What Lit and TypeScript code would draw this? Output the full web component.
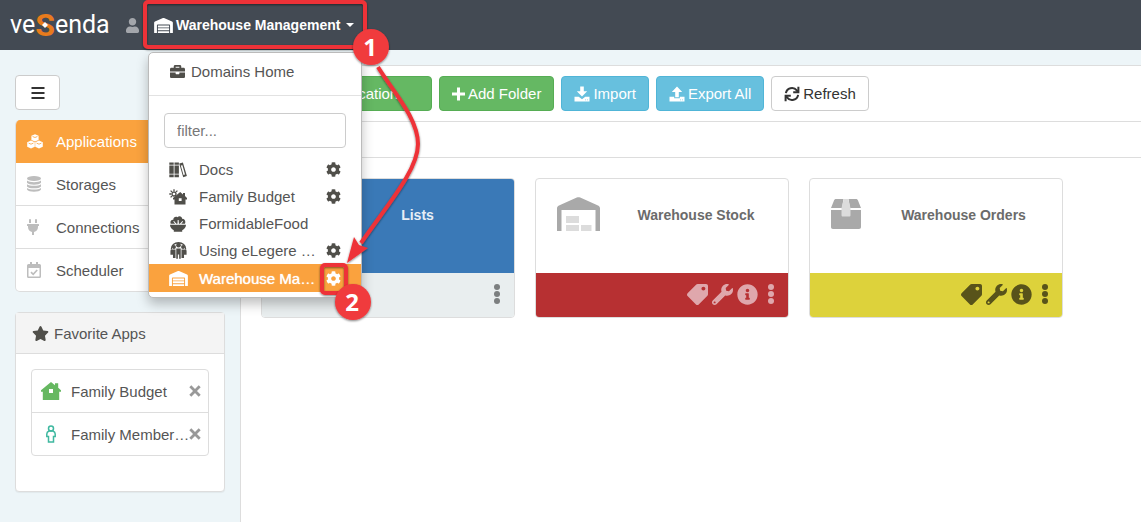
import { LitElement, html, svg, css, nothing } from "lit";
import { customElement, property, state } from "lit/decorators.js";
import { classMap } from "lit/directives/class-map.js";

const COG =
  "M487.4 315.7l-42.6-24.6c4.3-23.2 4.3-47 0-70.2l42.6-24.6c4.9-2.8 7.1-8.6 5.5-14-11.1-35.6-30-67.8-54.7-94.6-3.8-4.1-10-5.1-14.8-2.3L380.8 110c-17.9-15.4-38.5-27.3-60.8-35.1V25.8c0-5.6-3.9-10.5-9.4-11.7-36.7-8.2-74.3-7.8-109.2 0-5.5 1.2-9.4 6.1-9.4 11.7V75c-22.2 7.9-42.8 19.8-60.8 35.1L88.7 85.5c-4.9-2.8-11-1.9-14.8 2.3-24.7 26.7-43.6 58.9-54.7 94.6-1.7 5.4.6 11.2 5.5 14L67.3 221c-4.3 23.2-4.3 47 0 70.2l-42.6 24.6c-4.9 2.8-7.1 8.6-5.5 14 11.1 35.6 30 67.8 54.7 94.6 3.8 4.1 10 5.1 14.8 2.3l42.6-24.6c17.9 15.4 38.5 27.3 60.8 35.1v49.2c0 5.6 3.9 10.5 9.4 11.7 36.7 8.2 74.3 7.8 109.2 0 5.5-1.2 9.4-6.1 9.4-11.7v-49.2c22.2-7.9 42.8-19.8 60.8-35.1l42.6 24.6c4.9 2.8 11 1.9 14.8-2.3 24.7-26.7 43.6-58.9 54.7-94.6 1.5-5.5-.7-11.3-5.6-14.1zM256 336c-44.1 0-80-35.9-80-80s35.9-80 80-80 80 35.9 80 80-35.9 80-80 80z";
const WAREHOUSE =
  "M504 352H136.4c-4.4 0-8 3.6-8 8l-.1 48c0 4.4 3.6 8 8 8H504c4.4 0 8-3.6 8-8v-48c0-4.4-3.6-8-8-8zm0 96H136.1c-4.4 0-8 3.6-8 8l-.1 48c0 4.4 3.6 8 8 8h368c4.4 0 8-3.6 8-8v-48c0-4.4-3.6-8-8-8zm0-192H136.6c-4.4 0-8 3.6-8 8l-.1 48c0 4.4 3.6 8 8 8H504c4.4 0 8-3.6 8-8v-48c0-4.4-3.6-8-8-8zm106.5-139L338.4 3.7a48.15 48.15 0 0 0-36.9 0L29.5 117C11.7 124.5 0 141.9 0 161.3V504c0 4.4 3.6 8 8 8h80c4.4 0 8-3.6 8-8V256c0-17.6 14.6-32 32.6-32h382.8c18 0 32.6 14.4 32.6 32v248c0 4.4 3.6 8 8 8h80c4.4 0 8-3.6 8-8V161.3c0-19.4-11.7-36.8-29.5-44.3z";
const USER =
  "M224 256c70.7 0 128-57.3 128-128S294.7 0 224 0 96 57.3 96 128s57.3 128 128 128zm89.6 32h-16.7c-22.2 10.2-46.9 16-72.9 16s-50.6-5.8-72.9-16h-16.7C60.2 288 0 348.2 0 422.4V464c0 26.5 21.5 48 48 48h352c26.5 0 48-21.5 48-48v-41.6c0-74.2-60.2-134.4-134.4-134.4z";
const BRIEFCASE =
  "M320 336c0 8.84-7.16 16-16 16h-96c-8.84 0-16-7.16-16-16v-48H0v144c0 25.6 22.4 48 48 48h416c25.6 0 48-22.4 48-48V288H320v48zm144-208h-80V80c0-25.6-22.4-48-48-48H176c-25.6 0-48 22.4-48 48v48H48c-25.6 0-48 22.4-48 48v80h512v-80c0-25.6-22.4-48-48-48zm-144 0H192V96h128v32z";
const TAG =
  "M0 252.118V48C0 21.49 21.49 0 48 0h204.118a48 48 0 0 1 33.941 14.059l211.882 211.882c18.745 18.745 18.745 49.137 0 67.882L293.823 497.941c-18.745 18.745-49.137 18.745-67.882 0L14.059 286.059A48 48 0 0 1 0 252.118zM112 64c-26.51 0-48 21.49-48 48s21.49 48 48 48 48-21.49 48-48-21.49-48-48-48z";
const WRENCH =
  "M507.73 109.1c-2.24-9.03-13.54-12.09-20.12-5.51l-74.36 74.36-67.88-11.31-11.31-67.88 74.36-74.36c6.62-6.62 3.43-17.9-5.66-20.16-47.38-11.74-99.55.91-136.58 37.93-39.64 39.64-50.55 97.1-34.05 147.2L18.74 402.76c-24.99 24.99-24.99 65.51 0 90.5 24.99 24.99 65.51 24.99 90.5 0l213.21-213.21c50.12 16.71 107.47 5.68 147.37-34.22 37.07-37.07 49.7-89.32 37.91-136.73zM64 472c-13.25 0-24-10.75-24-24 0-13.26 10.75-24 24-24s24 10.74 24 24c0 13.25-10.75 24-24 24z";
const INFO =
  "M256 8C119.043 8 8 119.083 8 256c0 136.997 111.043 248 248 248s248-111.003 248-248C504 119.083 392.957 8 256 8zm0 110c23.196 0 42 18.804 42 42s-18.804 42-42 42-42-18.804-42-42 18.804-42 42-42zm56 254c0 6.627-5.373 12-12 12h-88c-6.627 0-12-5.373-12-12v-24c0-6.627 5.373-12 12-12h12v-64h-12c-6.627 0-12-5.373-12-12v-24c0-6.627 5.373-12 12-12h64c6.627 0 12 5.373 12 12v100h12c6.627 0 12 5.373 12 12v24z";
const STAR =
  "M259.3 17.8L194 150.2 47.9 171.5c-26.2 3.8-36.7 36.1-17.7 54.6l105.7 103-25 145.5c-4.5 26.3 23.2 46 46.4 33.7L288 439.6l130.7 68.7c23.2 12.2 50.9-7.4 46.4-33.7l-25-145.5 105.7-103c19-18.5 8.5-50.8-17.7-54.6L382 150.2 316.7 17.8c-11.7-23.6-45.6-23.9-57.4 0z";
const PLUG =
  "M320,32a32,32,0,0,0-64,0v96h64Zm48,128H16A16,16,0,0,0,0,176v32a16,16,0,0,0,16,16H32v32A160.07,160.07,0,0,0,160,412.8V512h64V412.8A160.07,160.07,0,0,0,352,256V224h16a16,16,0,0,0,16-16V176A16,16,0,0,0,368,160ZM128,32a32,32,0,0,0-64,0v96h64Z";

interface Glyph {
  box: string;
  w: number;
  h: number;
  body: unknown;
}

const solid = (box: string, w: number, h: number, d: string): Glyph => ({
  box,
  w,
  h,
  body: svg`<path fill="currentColor" d=${d}></path>`,
});

const glyphs: Record<string, Glyph> = {
  cog: solid("0 0 512 512", 15, 15, COG),
  warehouse: solid("0 0 640 512", 19, 15, WAREHOUSE),
  user: solid("0 0 448 512", 13, 15, USER),
  briefcase: solid("0 0 512 512", 15, 15, BRIEFCASE),
  wrench: solid("0 0 512 512", 21, 21, WRENCH),
  info: solid("0 0 512 512", 21, 21, INFO),
  star: solid("0 0 576 512", 17, 15, STAR),
  plug: solid("0 0 384 512", 12, 16, PLUG),
  tag: {
    box: "0 0 512 512",
    w: 21,
    h: 21,
    body: svg`<path fill="currentColor" transform="translate(512 0) scale(-1 1)" d=${TAG}></path>`,
  },
  dots: {
    box: "0 0 8 20",
    w: 8,
    h: 20,
    body: svg`<g fill="currentColor"><circle cx="4" cy="3" r="3"></circle><circle cx="4" cy="10" r="3"></circle><circle cx="4" cy="17" r="3"></circle></g>`,
  },
  bars: {
    box: "0 0 14 12",
    w: 14,
    h: 12,
    body: svg`<path fill="currentColor" d="M.5 0h13v2H.5zM.5 5h13v2H.5zM.5 10h13v2H.5z"></path>`,
  },
  cubes: {
    box: "0 0 16 15",
    w: 16,
    h: 15,
    body: svg`<g fill="currentColor"><path d="M8 .2l3.600 1.500v4.300L8 7.600 4.400 6V1.700z"></path><path d="M4 6.600l3.800 1.700v4.500L4 14.600.2 12.800V8.300z"></path><path d="M12 6.600l3.800 1.700v4.500L12 14.600l-3.800-1.800V8.300z"></path></g><path fill="none" stroke="#faa23e" stroke-width=".8" d="M5.600 2.500L8 3.500l2.400-1M1.600 9.100L4 10.200 6.400 9.100M9.600 9.100l2.400 1.100 2.400-1.100"></path>`,
  },
  database: {
    box: "0 0 14 16",
    w: 14,
    h: 16,
    body: svg`<g fill="currentColor"><ellipse cx="7" cy="2.600" rx="7" ry="2.500"></ellipse><path d="M0 4.500c2.500 2.200 11.500 2.200 14 0V6.700c-1.500 2.600-12.500 2.600-14 0zM0 8.200c2.500 2.200 11.500 2.200 14 0v2.200c-1.500 2.600-12.500 2.600-14 0zM0 11.900c2.500 2.200 11.500 2.200 14 0v1.600c-1.500 2.900-12.500 2.900-14 0z"></path></g>`,
  },
  calendar: {
    box: "0 0 14 16",
    w: 14,
    h: 16,
    body: svg`<path fill="currentColor" fill-rule="evenodd" d="M3 0h2v2h4V0h2v2h1.500A1.500 1.500 0 0 1 14 3.500v11a1.500 1.500 0 0 1-1.500 1.500h-11A1.500 1.500 0 0 1 0 14.500v-11A1.500 1.500 0 0 1 1.500 2H3zM1.500 6v8.500h11V6z"></path><path fill="none" stroke="currentColor" stroke-width="1.700" d="M4 10.200l2.200 2.100L10.200 8"></path>`,
  },
  plus: {
    box: "0 0 13 14",
    w: 13,
    h: 14,
    body: svg`<path fill="none" stroke="currentColor" stroke-width="3" d="M6.500.5v13M0 7h13"></path>`,
  },
  download: {
    box: "0 0 16 16",
    w: 16,
    h: 16,
    body: svg`<path fill="currentColor" d="M6.200.5h3.600v4.800h3.400L8 10.500 2.800 5.300h3.400z"></path><path fill="currentColor" fill-rule="evenodd" d="M.5 10.700h4.200L8 13.200l3.300-2.500h4.200v4.800H.5zM11.200 13.500v.8h.8v-.8zm2 0v.8h.8v-.8z"></path>`,
  },
  upload: {
    box: "0 0 16 16",
    w: 16,
    h: 16,
    body: svg`<path fill="currentColor" d="M6.200 11.200h3.600V6h3.400L8 .6 2.800 6h3.400z"></path><path fill="currentColor" fill-rule="evenodd" d="M.5 10.700h4.700v1.600h5.600v-1.600h4.700v4.800H.5zM11.200 13.500v.8h.8v-.8zm2 0v.8h.8v-.8z"></path>`,
  },
  refresh: {
    box: "0 0 16 16",
    w: 16,
    h: 16,
    body: svg`<g fill="none" stroke="currentColor" stroke-width="2"><path d="M1.900 7.200A6.100 6.100 0 0 1 12.800 4.400l1.300 1.700"></path><path d="M14.400.8v5.500H9.200"></path><path d="M14.100 8.800A6.100 6.100 0 0 1 3.200 11.600L1.900 9.900"></path><path d="M1.600 15.200V9.700h5.200"></path></g>`,
  },
  books: {
    box: "0 0 18 16",
    w: 18,
    h: 16,
    body: svg`<path fill="currentColor" fill-rule="evenodd" d="M.300.500h4.400v2.200H.3zM.3 3.400h4.400v8.400H.3zM.3 12.500h4.400v2.800H.3zM5.500.500h4.400v2.200H5.500zM5.500 3.400h4.400v8.400H5.500zM5.500 12.500h4.400v2.800H5.500zM10.200 1.600l3.700-1.100 4 13.600-3.700 1.200zM11.800 3.600l2.700 9.300 1.500-.5-2.600-9.200z"></path>`,
  },
  sunhouse: {
    box: "0 0 18 16",
    w: 18,
    h: 16,
    body: svg`<circle cx="5" cy="5" r="2" fill="none" stroke="currentColor" stroke-width="1.300"></circle><path stroke="currentColor" stroke-width="1.300" d="M5 .3v1.800M.3 5h1.800M1.600 1.600l1.300 1.300M8.400 1.600L7.100 2.900M1.600 8.400l1.300-1.300"></path><path fill="currentColor" fill-rule="evenodd" d="M11.200 3l2.800 2.400V4h2v3.100l2 1.800v1.500h-1.500v5h-11v-5H4V8.900zM9.800 9.200v2.800h2.800V9.200z"></path>`,
  },
  bowl: {
    box: "0 0 16 16",
    w: 16,
    h: 16,
    body: svg`<path fill="currentColor" d="M0 8.800h16c0 2.600-1.600 4.500-3.800 5.400v1.500H3.800v-1.500C1.600 13.300 0 11.400 0 8.800zM.8 7.800C-.3 5.800 1.200 3.600 3.200 3.900 3.300 1.300 5.600.2 7.400 1.200 9.400-.5 12.200.6 12.100 2.900c2.300-.3 4 2.100 2.900 4.900h-3.700l1.800-2.200-.7-.6-2.500 2.800H8.900L8.600 4h-.9L7.500 7.800H6.400L4 5l-.7.6 1.800 2.200z"></path>`,
  },
  people: {
    box: "0 0 16 16",
    w: 17,
    h: 17,
    body: svg`<g fill="currentColor"><circle cx="8" cy="3" r="2.200"></circle><circle cx="3.700" cy="4.700" r="1.900"></circle><circle cx="12.300" cy="4.700" r="1.900"></circle><path d="M5.900 6h4.200v9.800H8.600v-4H7.400v4H5.900zM1.200 7h4v8H2.800v-3H.4V8zM14.800 7h-4v8h2.400v-3h2.400V8z"></path></g><path fill="none" stroke="currentColor" stroke-width="1.200" d="M1.200 7C.6-1.400 15.400-1.400 14.800 7"></path>`,
  },
  home: {
    box: "0 0 20 18",
    w: 20,
    h: 18,
    body: svg`<path fill="currentColor" fill-rule="evenodd" d="M10 0l4 3.200V1.200h3.200v4.600L20 8.300v1.500h-1.800V18H1.800V9.800H0V8.300zM8 7v4h4V7z"></path>`,
  },
  person: {
    box: "0 0 10 18",
    w: 10,
    h: 18,
    body: svg`<g fill="none" stroke="currentColor" stroke-width="1.500"><circle cx="5" cy="3.400" r="2.500"></circle><path d="M3 6h4c1.500.6 2.200 1.500 2.200 3v2.600H7.500v5.500h-5v-5.500H.8V9c0-1.500.7-2.400 2.200-3z"></path></g>`,
  },
  cross: {
    box: "0 0 12 12",
    w: 12,
    h: 12,
    body: svg`<path stroke="currentColor" stroke-width="2.800" d="M1.300 1.300l9.400 9.400M10.700 1.300l-9.400 9.400"></path>`,
  },
  stock: {
    box: "0 0 43 34",
    w: 43,
    h: 34,
    body: svg`<path fill="#a9a9a9" d="M0 34V11.500c0-1.400.7-2.300 2-2.900L19.800.6c1.200-.5 2.200-.5 3.400 0L41 8.600c1.300.6 2 1.500 2 2.900V34h-4.500V13H4.500v21z"></path><path fill="#dcdcdc" d="M9 19h13v7H9zM9 28h13v6H9zM24 28h10.500v6H24z"></path>`,
  },
  box: {
    box: "0 -2 30 34",
    w: 30,
    h: 34,
    body: svg`<path fill="#a9a9a9" d="M5 0h7.500L11 9H0l3-7.500C3.400.500 4 0 5 0zM17.500 0H25c1 0 1.600.5 2 1.500L30 9H19zM0 11h30v17c0 1.300-.7 2-2 2H2c-1.300 0-2-.7-2-2z"></path><path fill="#dcdcdc" d="M12.800 0h4.400l2.300 9v7c0 1-.5 1.500-1.500 1.500h-6c-1 0-1.500-.5-1.500-1.500V9z"></path>`,
  },
  list: {
    box: "0 0 34 30",
    w: 34,
    h: 30,
    body: svg`<path fill="#bcd3e8" d="M0 2h6v6H0zM10 3h24v4H10zM0 12h6v6H0zM10 13h24v4H10zM0 22h6v6H0zM10 23h24v4H10z"></path>`,
  },
};

const icon = (name: string) => {
  const g = glyphs[name];
  return html`<svg class="icon" viewBox=${g.box} width=${g.w} height=${g.h} aria-hidden="true">${g.body}</svg>`;
};

const base = css`
  * {
    box-sizing: border-box;
  }
  button,
  input {
    font: inherit;
    color: inherit;
    margin: 0;
  }
  button {
    background: none;
    border: 0;
    padding: 0;
    cursor: pointer;
  }
  a {
    color: inherit;
    text-decoration: none;
  }
  ul {
    list-style: none;
    margin: 0;
    padding: 0;
  }
  .icon {
    display: block;
    flex: none;
  }
`;

@customElement("domain-menu")
export class DomainMenu extends LitElement {
  static styles = [
    base,
    css`
      :host {
        display: block;
        position: relative;
      }
      .toggle {
        display: flex;
        align-items: center;
        gap: 3px;
        height: 50px;
        padding: 0 6px;
        color: #fff;
        font-size: 14px;
        font-weight: bold;
        white-space: nowrap;
      }
      .caret {
        border: 4px solid transparent;
        border-top-color: #fff;
        border-bottom: 0;
        margin-left: 3px;
      }
      .menu {
        position: absolute;
        top: 52px;
        left: 0;
        z-index: 5;
        width: 214px;
        padding: 4px 0 5px;
        background: #fff;
        border: 1px solid #bbb;
        border-radius: 5px;
        box-shadow: 0 6px 12px rgba(0, 0, 0, 0.25);
        color: #555;
      }
      .home {
        display: flex;
        align-items: center;
        gap: 6px;
        height: 28px;
        padding: 0 21px;
      }
      .home .icon {
        color: #504f4a;
      }
      .filter-row {
        display: block;
        margin-top: 10px;
        padding: 17px 15px 8px;
        border-top: 1px solid #e2e2e2;
      }
      .filter {
        display: block;
        width: 100%;
        height: 35px;
        padding: 0 12px;
        border: 1px solid #ccc;
        border-radius: 4px;
        background: #fff;
        outline: 0;
      }
      .filter::placeholder {
        color: #777;
        opacity: 1;
      }
      .row {
        display: grid;
        grid-template-columns: 30px 1fr 15px;
        align-items: center;
        height: 27px;
        padding: 0 20px;
      }
      .row .icon {
        color: #504f4a;
      }
      .row.active {
        height: 28px;
        background: #faa23e;
        color: #fff;
        text-shadow: 0 0 1px #fff;
      }
      .row.active .icon {
        color: #fff;
      }
      .name {
        white-space: nowrap;
      }
      .glyph {
        display: grid;
        width: 18px;
        justify-items: center;
      }
    `,
  ];

  @state() private open = true;
  @state() private query = "";

  private domains = [
    { name: "Docs", icon: "books", settings: true },
    { name: "Family Budget", icon: "sunhouse", settings: true },
    { name: "FormidableFood", icon: "bowl", settings: false },
    { name: "Using eLegere …", icon: "people", settings: true },
    { name: "Warehouse Ma…", icon: "warehouse", settings: true },
  ];

  render() {
    const shown = this.domains.filter((d) =>
      d.name.toLowerCase().includes(this.query.toLowerCase())
    );
    return html`
      <button class="toggle" aria-expanded=${this.open} @click=${() => (this.open = !this.open)}>
        ${icon("warehouse")}<span>Warehouse Management</span><span class="caret"></span>
      </button>
      ${this.open
        ? html`<div class="menu">
            <a class="home" href="#home">${icon("briefcase")}Domains Home</a>
            <label class="filter-row">
              <input
                class="filter"
                type="text"
                aria-label="Filter domains"
                placeholder="filter..."
                @input=${(e: Event) => (this.query = (e.target as HTMLInputElement).value)}
              />
            </label>
            <ul>
              ${shown.map(
                (d) => html`<li class=${classMap({ row: true, active: d.icon === "warehouse" })}>
                  <span class="glyph">${icon(d.icon)}</span>
                  <a class="name" href="#domain">${d.name}</a>
                  ${d.settings
                    ? html`<button aria-label="Settings">${icon("cog")}</button>`
                    : nothing}
                </li>`
              )}
            </ul>
          </div>`
        : nothing}
    `;
  }
}

@customElement("app-card")
export class AppCard extends LitElement {
  static styles = [
    base,
    css`
      :host {
        display: block;
      }
      .card {
        border: 1px solid #ddd;
        border-radius: 4px;
        overflow: hidden;
        background: #fff;
      }
      .top {
        display: flex;
        align-items: flex-start;
        height: 94px;
        padding: 18px 16px 0 21px;
        color: #6b6b6b;
      }
      .title {
        flex: 1;
        margin: 0 0 0 20px;
        font-size: 14px;
        line-height: 36px;
        font-weight: bold;
        text-align: center;
      }
      .foot {
        display: flex;
        align-items: center;
        justify-content: flex-end;
        gap: 4px;
        height: 44px;
        padding: 0 13px 2px 0;
      }
      .foot .more {
        margin-left: 5px;
      }
      .lists .top {
        background: #3a79b7;
        color: #e6eef6;
      }
      .lists .foot {
        background: #e9eeef;
        color: #7c7f80;
      }
      .stock .foot {
        background: #b73032;
        color: #dfa7ac;
      }
      .orders .foot {
        background: #ddd23b;
        color: #58531a;
      }
    `,
  ];

  @property() name = "";
  @property() glyph = "";
  @property() kind = "";
  @property({ type: Boolean }) folder = false;

  render() {
    return html`<article class="card ${this.kind}">
      <div class="top">
        ${icon(this.glyph)}
        <h3 class="title">${this.name}</h3>
      </div>
      <div class="foot">
        ${this.folder
          ? nothing
          : html`<button aria-label="Tags">${icon("tag")}</button>
              <button aria-label="Configure">${icon("wrench")}</button>
              <button aria-label="Details">${icon("info")}</button>`}
        <button class="more" aria-label="More">${icon("dots")}</button>
      </div>
    </article>`;
  }
}

@customElement("app-root")
export class AppRoot extends LitElement {
  static styles = [
    base,
    css`
      :host {
        display: flex;
        flex-direction: column;
        position: relative;
        min-height: 100vh;
        overflow: hidden;
        background: #edf5f8;
        font: 15px/21px "Liberation Sans", Arial, sans-serif;
        color: #555;
      }
      .header {
        display: flex;
        align-items: center;
        height: 50px;
        padding-left: 10px;
        background: #434a53;
      }
      .logo {
        display: flex;
        align-items: center;
        width: 98px;
        height: 50px;
        color: #fff;
        font-family: Roboto, sans-serif;
        font-size: 25px;
        line-height: 50px;
      }
      .mark {
        position: relative;
        color: #e87b1c;
        font-size: 32px;
        font-weight: bold;
      }
      .spark {
        position: absolute;
        left: 50%;
        top: 50%;
        translate: -50% -50%;
      }
      .user {
        margin: 0 9px 0 18px;
        color: #a3a6ab;
      }
      .layout {
        display: flex;
        flex: 1;
        padding-top: 15px;
      }
      .sidebar {
        flex: none;
        width: 240px;
        padding: 10px 15px;
      }
      .burger {
        display: grid;
        place-items: center;
        width: 45px;
        height: 35px;
        background: #fff;
        border: 1px solid #ccc;
        border-radius: 4px;
        color: #333;
      }
      .nav {
        margin-top: 10px;
        border: 1px solid #ddd;
        border-top: 0;
        border-radius: 5px;
        overflow: hidden;
        background: #fff;
      }
      .nav a {
        display: grid;
        grid-template-columns: 29px 1fr;
        align-items: center;
        height: 42px;
        padding-left: 11px;
      }
      .nav li + li {
        border-top: 1px solid #ddd;
      }
      .nav .icon {
        color: #bdbdbd;
      }
      .nav .current {
        height: 43px;
        background: #faa23e;
        color: #fff;
      }
      .nav .current .icon {
        color: #fff;
      }
      .nav .current + li {
        border-top: 0;
      }
      .panel {
        margin-top: 20px;
        border: 1px solid #ddd;
        border-radius: 4px;
        background: #fff;
        box-shadow: 0 1px 1px rgba(0, 0, 0, 0.05);
      }
      .panel-title {
        display: flex;
        align-items: center;
        gap: 5px;
        height: 41px;
        margin: 0;
        padding-left: 16px;
        background: #f4f4f4;
        border-bottom: 1px solid #ddd;
        font: inherit;
      }
      .panel-title .icon {
        color: #504f4a;
      }
      .favs {
        margin: 15px 15px 35px;
        border: 1px solid #ddd;
        border-radius: 4px;
      }
      .fav {
        display: grid;
        grid-template-columns: 30px 1fr 12px;
        align-items: center;
        height: 42px;
        padding: 0 7px 0 9px;
      }
      .fav + .fav {
        border-top: 1px solid #ddd;
        height: 43px;
      }
      .fav button {
        color: #999;
      }
      .fav-name {
        white-space: nowrap;
      }
      .fav-glyph {
        display: grid;
        width: 20px;
        justify-items: center;
        color: #66b861;
      }
      .teal {
        color: #3fb8a0;
      }
      .content {
        flex: 1;
        min-width: 0;
        background: #fff;
        border: 1px solid #ddd;
        border-right: 0;
        border-bottom: 0;
      }
      .toolbar {
        display: flex;
        gap: 7px;
        padding: 10px 20px;
        border-bottom: 1px solid #ddd;
      }
      .btn {
        display: flex;
        align-items: center;
        justify-content: center;
        gap: 3px;
        height: 35px;
        padding: 0 12px;
        border: 1px solid #ccc;
        border-radius: 4px;
        color: #333;
        background: #fff;
        white-space: nowrap;
      }
      .green {
        background: #65b863;
        border-color: #56ad54;
        color: #fff;
      }
      .blue {
        background: #67c0de;
        border-color: #50b5d7;
        color: #fff;
      }
      .wide {
        width: 171px;
      }
      .crumbs {
        height: 36px;
        border-bottom: 1px solid #ddd;
      }
      .cards {
        display: grid;
        grid-template-columns: repeat(auto-fill, 254px);
        gap: 20px;
        padding: 20px;
      }
      .notes {
        position: absolute;
        left: 0;
        top: 0;
        z-index: 10;
        pointer-events: none;
        font: bold 24px "Open Sans", sans-serif;
      }
    `,
  ];

  private nav = [
    { name: "Applications", icon: "cubes" },
    { name: "Storages", icon: "database" },
    { name: "Connections", icon: "plug" },
    { name: "Scheduler", icon: "calendar" },
  ];

  render() {
    return html`
      <header class="header">
        <a class="logo" href="#top"
          >ve<span class="mark"
            >S<svg class="spark" width="6" height="6" viewBox="0 0 6 6" aria-hidden="true">
              <path fill="#fff" d="M3 0l3 3-3 3-3-3z"></path></svg></span
          >enda</a
        >
        <button class="user" aria-label="Account">${icon("user")}</button>
        <domain-menu></domain-menu>
      </header>
      <div class="layout">
        <aside class="sidebar">
          <button class="burger" aria-label="Toggle navigation">${icon("bars")}</button>
          <ul class="nav">
            ${this.nav.map(
              (n, i) => html`<li class=${classMap({ current: i === 0 })}>
                <a href="#section">${icon(n.icon)}${n.name}</a>
              </li>`
            )}
          </ul>
          <section class="panel">
            <h2 class="panel-title">${icon("star")}Favorite Apps</h2>
            <ul class="favs">
              <li class="fav">
                <span class="fav-glyph">${icon("home")}</span>
                <a class="fav-name" href="#fav">Family Budget</a>
                <button aria-label="Remove Family Budget">${icon("cross")}</button>
              </li>
              <li class="fav">
                <span class="fav-glyph teal">${icon("person")}</span>
                <a class="fav-name" href="#fav">Family Member…</a>
                <button aria-label="Remove Family Members">${icon("cross")}</button>
              </li>
            </ul>
          </section>
        </aside>
        <main class="content">
          <div class="toolbar">
            <button class="btn green wide">Add Application</button>
            <button class="btn green">${icon("plus")}Add Folder</button>
            <button class="btn blue">${icon("download")}<span>Import</span></button>
            <button class="btn blue">${icon("upload")}<span>Export All</span></button>
            <button class="btn">${icon("refresh")}<span>Refresh</span></button>
          </div>
          <div class="crumbs"></div>
          <div class="cards">
            <app-card name="Lists" glyph="list" kind="lists" folder></app-card>
            <app-card name="Warehouse Stock" glyph="stock" kind="stock"></app-card>
            <app-card name="Warehouse Orders" glyph="box" kind="orders"></app-card>
          </div>
        </main>
      </div>
      <svg class="notes" width="440" height="330" viewBox="0 0 440 330">
        <defs>
          <filter id="soft" x="-20%" y="-20%" width="140%" height="140%">
            <feDropShadow dx="0" dy="1" stdDeviation="1" flood-color="#000" flood-opacity=".5"></feDropShadow>
          </filter>
        </defs>
        <g fill="none" stroke="#ee3338" stroke-width="4" filter="url(#soft)">
          <rect x="145" y="2" width="220" height="45" rx="3"></rect>
          <rect x="322" y="265" width="24" height="28" rx="3"></rect>
          <path d="M378 67C392 90 418 118 418 144C418 170 388 204 361 243"></path>
          <path fill="#ee3338" stroke="none" d="M347 263l7-26 5 8 9 3z"></path>
        </g>
        <g fill="#f03a3e" filter="url(#soft)">
          <circle cx="371" cy="47" r="18"></circle>
          <circle cx="353" cy="302" r="18"></circle>
        </g>
        <g fill="#fff" text-anchor="middle">
          <text x="370" y="56">1</text>
          <text x="352" y="311">2</text>
        </g>
      </svg>
    `;
  }
}
